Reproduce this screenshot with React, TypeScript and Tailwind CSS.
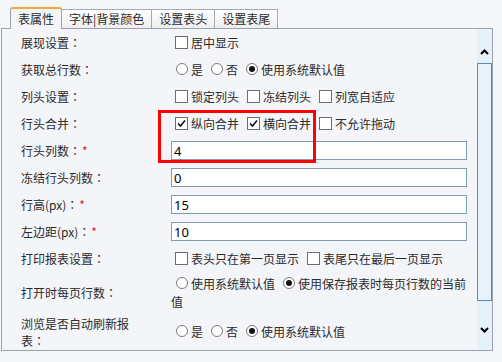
import React from 'react';

const FONT = "font-['Noto_Sans_CJK_SC','Noto_Sans',sans-serif]";

const Check = ({ checked = false, first = false }: { checked?: boolean; first?: boolean }) => (
  <span
    className={`inline-block align-middle relative -top-px w-[13px] h-[13px] border border-[#6e6e6e] bg-white ${first ? 'ml-[4px]' : 'ml-[8px]'}`}
  >
    {checked && (
      <svg width="11" height="11" viewBox="0 0 11 11" className="absolute left-0 top-0">
        <path d="M2 5.5 L4.5 8 L9 2.5" stroke="#111" strokeWidth="1.6" fill="none" />
      </svg>
    )}
  </span>
);

const Radio = ({ checked = false, first = false }: { checked?: boolean; first?: boolean }) => (
  <span
    className={`inline-flex align-middle relative -top-px items-center justify-center w-[12px] h-[12px] rounded-full border border-[#7a7a7a] bg-white ${first ? 'ml-[5px]' : 'ml-[8px]'}`}
  >
    {checked && <span className="w-[6px] h-[6px] rounded-full bg-[#111]" />}
  </span>
);

const Txt = ({ children }: { children: React.ReactNode }) => (
  <span className="align-middle ml-[3px]">{children}</span>
);

// centred full-width colon, as the original font draws it
const Colon = () => <span className="font-['Noto_Sans_CJK_TC',sans-serif]">：</span>;

const Star = () => <span className="text-[#e02020] ml-px">*</span>;

const Row = ({ label, h = 'h-[27px]', children }: { label: React.ReactNode; h?: string; children: React.ReactNode }) => (
  <div className={`flex items-center ${h}`}>
    <div className="w-[124px] mr-[26px] shrink-0 leading-[17px]">{label}</div>
    <div className="w-[296px] leading-[18px]">{children}</div>
  </div>
);

const Field = ({ value }: { value: string }) => (
  <input
    readOnly
    value={value}
    className="block w-[296px] h-[19px] border border-[#7f9db9] bg-white px-[2px] text-[13px] text-black outline-none font-['Noto_Sans',sans-serif]"
  />
);

const Chevron = ({ down = false }: { down?: boolean }) => (
  <svg width="9" height="6" viewBox="0 0 9 6">
    <path d={down ? 'M1 1 L4.5 4.5 L8 1' : 'M1 5 L4.5 1.5 L8 5'} stroke="#000" strokeWidth="2" fill="none" />
  </svg>
);

export default function App() {
  return (
    <div className={`relative w-[502px] h-[362px] overflow-hidden bg-[#f5f6f9] text-[12px] text-[#2b2b2b] ${FONT}`}>
      {/* Tabs */}
      <div className="flex items-end h-[28px] pl-[10px]">
        <div className="relative top-px z-10 h-[22px] px-[7px] flex items-center bg-[#f4f5f9] border-x border-[#9aa3ad] border-t-2 border-t-[#f2a83c] rounded-t-[3px]">
          表属性
        </div>
        <div className="h-[19px] px-[7px] flex items-center border-r border-t border-[#a3a9b1] bg-gradient-to-b from-white to-[#eeeeee]">
          字体|背景颜色
        </div>
        <div className="h-[19px] px-[7px] flex items-center border-r border-t border-[#a3a9b1] bg-gradient-to-b from-white to-[#eeeeee]">
          设置表头
        </div>
        <div className="h-[19px] px-[7px] flex items-center border-r border-t border-[#a3a9b1] bg-gradient-to-b from-white to-[#eeeeee]">
          设置表尾
        </div>
      </div>

      {/* Panel */}
      <div className="ml-px w-[492px] h-[323px] border border-[#9aa3ad] bg-[#f4f5f9] flex">
        <div className="flex-1 flex flex-col pl-[19px]">
          <Row label={<>展现设置<Colon /></>}>
            <Check first /><Txt>居中显示</Txt>
          </Row>
          <Row label={<>获取总行数<Colon /></>}>
            <Radio first /><Txt>是</Txt>
            <Radio /><Txt>否</Txt>
            <Radio checked /><Txt>使用系统默认值</Txt>
          </Row>
          <Row label={<>列头设置<Colon /></>}>
            <Check first /><Txt>锁定列头</Txt>
            <Check /><Txt>冻结列头</Txt>
            <Check /><Txt>列宽自适应</Txt>
          </Row>
          <Row label={<>行头合并<Colon /></>}>
            <Check first checked /><Txt>纵向合并</Txt>
            <Check checked /><Txt>横向合并</Txt>
            <Check /><Txt>不允许拖动</Txt>
          </Row>
          <Row label={<>行头列数<Colon /><Star /></>}>
            <Field value="4" />
          </Row>
          <Row label={<>冻结行头列数<Colon /></>}>
            <Field value="0" />
          </Row>
          <Row label={<>行高(px)<Colon /><Star /></>}>
            <Field value="15" />
          </Row>
          <Row label={<>左边距(px)<Colon /><Star /></>}>
            <Field value="10" />
          </Row>
          <Row label={<>打印报表设置<Colon /></>}>
            <Check first /><Txt>表头只在第一页显示</Txt>
            <Check /><Txt>表尾只在最后一页显示</Txt>
          </Row>
          <Row label={<>打开时每页行数<Colon /></>} h="h-[41px]">
            <div className="whitespace-nowrap">
              <Radio first /><Txt>使用系统默认值</Txt>
              <Radio checked /><Txt>使用保存报表时每页行数的当前</Txt>
            </div>
            <div>值</div>
          </Row>
          <Row
            label={
              <>
                <div>浏览是否自动刷新报</div>
                <div>表<Colon /></div>
              </>
            }
            h="h-[37px]"
          >
            <Radio first /><Txt>是</Txt>
            <Radio /><Txt>否</Txt>
            <Radio checked /><Txt>使用系统默认值</Txt>
          </Row>
        </div>

        {/* Scrollbar */}
        <div className="w-[15px] flex flex-col bg-[#e5f1fb]">
          <div className="h-[34px] flex items-end justify-center pb-[8px]">
            <Chevron />
          </div>
          <div className="h-[238px] border border-[#5a8ab5] bg-[#e8f2fc]" />
          <div className="flex-1 flex justify-center pt-[26px]">
            <Chevron down />
          </div>
        </div>
      </div>

      {/* annotation */}
      <div className="absolute left-[158px] top-[110px] w-[158px] h-[53px] border-[3px] border-[#ff0000] pointer-events-none" />
    </div>
  );
}
